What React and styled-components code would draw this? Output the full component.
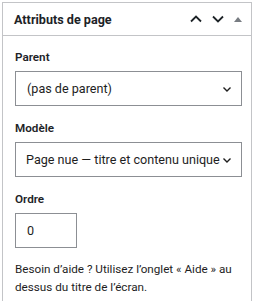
import React from "react";
import styled, { createGlobalStyle } from "styled-components";

const Global = createGlobalStyle`
  body {
    margin: 0;
    background: #fff;
    font-family: Roboto, "Liberation Sans", sans-serif;
    color: #1e1e1e;
  }
`;

const Box = styled.div`
  margin: 2px 2px 0;
  border: 1px solid #c3c4c7;
  border-bottom: none;
  height: 299px;
  box-sizing: border-box;
`;

const Header = styled.div`
  display: flex;
  align-items: center;
  height: 32px;
  padding: 0 6px 0 11px;
  border-bottom: 1px solid #c3c4c7;

  h2 {
    flex: 1;
    margin: 0;
    font-size: 12.6px;
    font-weight: 700;
    color: #1d2327;
  }
`;

const Actions = styled.div`
  display: flex;
  align-items: center;
  gap: 4px;
`;

const IconBtn = styled.span`
  display: flex;
  align-items: center;
  justify-content: center;
  width: ${(p) => (p.$small ? "14px" : "18px")};
  height: 18px;
  color: #1d2327;
`;

const Body = styled.div`
  padding: 14px 9px 0 12px;
`;

const Label = styled.p`
  margin: 0 0 7px;
  font-size: 11.7px;
  font-weight: 600;
  line-height: 14px;
  color: #1d2327;
`;

const Select = styled.div`
  display: flex;
  align-items: center;
  box-sizing: border-box;
  height: 35px;
  width: 227px;
  margin-bottom: 15px;
  border: 1px solid #8c8f94;
  padding: 0 9px 0 ${(p) => (p.$tight ? "10px" : "11px")};
  font-size: 12.6px;
  color: #1e1e1e;

  span {
    flex: 1;
    white-space: nowrap;
    overflow: hidden;
  }
`;

const Input = styled.div`
  display: flex;
  align-items: center;
  box-sizing: border-box;
  height: 35px;
  width: 62px;
  margin-bottom: 12px;
  border: 1px solid #8c8f94;
  padding-left: 11px;
  font-size: 12.6px;
`;

const Help = styled.p`
  margin: 0;
  font-size: 11.7px;
  line-height: 18px;
  color: #1e1e1e;
`;

const Chevron = ({ up }) => (
  <svg width="14" height="14" viewBox="0 0 14 14" fill="none">
    <path
      d={up ? "M2 9.5 L7 4.5 L12 9.5" : "M2 4.5 L7 9.5 L12 4.5"}
      stroke="currentColor"
      strokeWidth="1.8"
    />
  </svg>
);

const SmallChevron = () => (
  <svg width="10" height="10" viewBox="0 0 10 10" fill="none">
    <path d="M1.5 3.5 L5 7 L8.5 3.5" stroke="#1e1e1e" strokeWidth="1.4" />
  </svg>
);

export default function App() {
  return (
    <>
      <Global />
      <Box>
        <Header>
          <h2>Attributs de page</h2>
          <Actions>
            <IconBtn>
              <Chevron up />
            </IconBtn>
            <IconBtn>
              <Chevron />
            </IconBtn>
            <IconBtn $small>
              <svg width="10" height="8" viewBox="0 0 10 8">
                <path d="M1 7 L5 2 L9 7 Z" fill="#787c82" />
              </svg>
            </IconBtn>
          </Actions>
        </Header>
        <Body>
          <Label>Parent</Label>
          <Select>
            <span>(pas de parent)</span>
            <SmallChevron />
          </Select>
          <Label>Modèle</Label>
          <Select $tight>
            <span>Page nue — titre et contenu unique</span>
            <SmallChevron />
          </Select>
          <Label>Ordre</Label>
          <Input>0</Input>
          <Help>
            Besoin d’aide ? Utilisez l’onglet « Aide » au dessus du titre de
            l’écran.
          </Help>
        </Body>
      </Box>
    </>
  );
}
